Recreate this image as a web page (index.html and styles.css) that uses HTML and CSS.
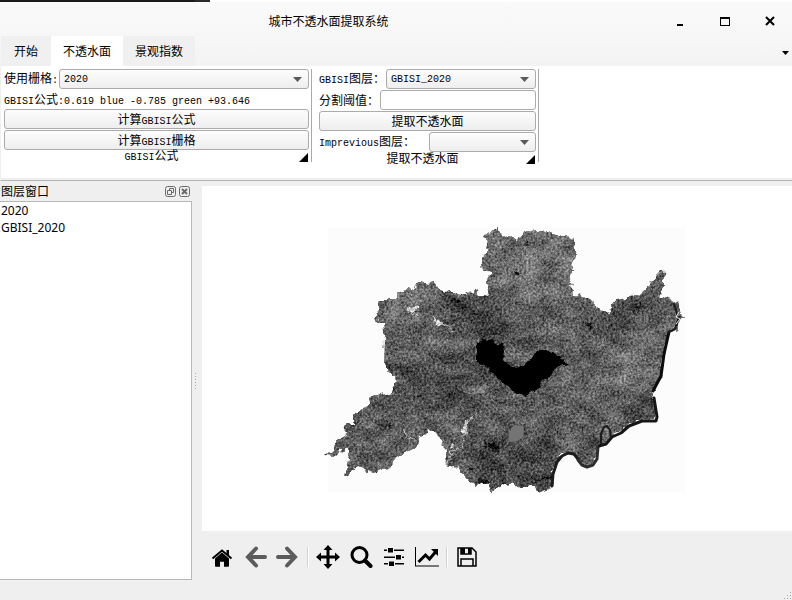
FILE: index.html
```html
<!DOCTYPE html>
<html lang="zh-CN">
<head>
<meta charset="utf-8">
<title>城市不透水面提取系统</title>
<link rel="stylesheet" href="styles.css">
</head>
<body>
<div class="window">
  <header class="titlebar">
    <h1 class="title">城市不透水面提取系统</h1>
    <button class="winbtn" aria-label="最小化"><svg width="12" height="12"><path d="M3 8h6v2H3z"/></svg></button>
    <button class="winbtn" aria-label="最大化"><svg width="12" height="12"><path d="M1 1h10v9H1zM2 3v6h8V3z" fill-rule="evenodd"/></svg></button>
    <button class="winbtn" aria-label="关闭"><svg width="12" height="12"><path d="M2 1l8 8M10 1l-8 8" class="cross"/></svg></button>
  </header>
  <nav class="tabs">
    <button class="tab">开始</button>
    <button class="tab active">不透水面</button>
    <button class="tab">景观指数</button>
    <button class="more" aria-label="更多"><svg width="7" height="4"><path d="M0 0h7L3.500 4z"/></svg></button>
  </nav>
  <section class="ribbon">
    <div class="group wide">
      <div class="row">
        <label for="raster">使用栅格<span class="en">:</span></label>
        <span class="combo"><select id="raster"><option>2020</option></select></span>
      </div>
      <p class="formula"><span class="en">GBISI</span>公式<span class="en">:0.619 blue -0.785 green +93.646</span></p>
      <button class="push">计算<span class="en">GBISI</span>公式</button>
      <button class="push">计算<span class="en">GBISI</span>栅格</button>
      <div class="caption"><span><span class="en">GBISI</span>公式</span><svg width="9" height="9"><path d="M9 0v9H0z"/></svg></div>
    </div>
    <div class="group narrow">
      <div class="row">
        <label for="layer"><span class="en">GBISI</span>图层：</label>
        <span class="combo"><select id="layer"><option>GBISI_2020</option></select></span>
      </div>
      <div class="row">
        <label for="threshold">分割阈值：</label>
        <input id="threshold" class="field" type="text">
      </div>
      <button class="push">提取不透水面</button>
      <div class="row">
        <label for="impervious" class="roomy"><span class="en">Imprevious</span>图层：</label>
        <span class="combo"><select id="impervious"><option></option></select></span>
      </div>
      <div class="caption"><span>提取不透水面</span><svg width="9" height="9"><path d="M9 0v9H0z"/></svg></div>
    </div>
  </section>
  <main class="workspace">
    <aside class="dock">
      <div class="dock-head">
        <h2>图层窗口</h2>
        <button aria-label="浮动"><svg width="11" height="11"><rect x=".5" y=".5" width="10" height="10" rx="2"/><path d="M4.500 4.500v-2h4v4h-2M2.500 4.500h4v4h-4z"/></svg></button>
        <button aria-label="关闭"><svg width="11" height="11"><rect x=".5" y=".5" width="10" height="10" rx="2"/><path d="M3 3l5 5M8 3l-5 5" class="thick"/></svg></button>
      </div>
      <ul class="layers">
        <li>2020</li>
        <li>GBISI_2020</li>
      </ul>
    </aside>
    <div class="splitter"><i></i><i></i><i></i><i></i><i></i><i></i></div>
    <div class="view">
      <div class="canvas">
        <svg class="map" viewBox="202 186 590 345" role="img" aria-label="GBISI_2020">
          <defs>
            <filter id="terrain" x="320" y="220" width="372" height="280" filterUnits="userSpaceOnUse" color-interpolation-filters="sRGB">
              <feTurbulence type="fractalNoise" baseFrequency=".14" numOctaves="2" seed="4" result="edge"/>
              <feDisplacementMap in="SourceGraphic" in2="edge" scale="9" xChannelSelector="R" yChannelSelector="G" result="land"/>
              <feTurbulence type="fractalNoise" baseFrequency=".45" numOctaves="3" seed="9"/>
              <feColorMatrix values="1 0 0 0 0 1 0 0 0 0 1 0 0 0 0 0 0 0 0 1" result="fine"/>
              <feTurbulence type="fractalNoise" baseFrequency=".05 .08" numOctaves="4" seed="21"/>
              <feColorMatrix values="0 1 0 0 0 0 1 0 0 0 0 1 0 0 0 0 0 0 0 1" result="coarse"/>
              <feComposite in="fine" in2="coarse" operator="arithmetic" k2=".65" k3=".35" result="noise"/>
              <feComposite in="land" in2="noise" operator="arithmetic" k2="1" k3="1" k4="-.5"/>
              <feColorMatrix values="1 0 0 0 0 0 1 0 0 0 0 0 1 0 0 0 0 0 0 1"/>
              <feComposite in2="land" operator="in"/>
            </filter>
            <filter id="shore" x="470" y="330" width="110" height="75" filterUnits="userSpaceOnUse">
              <feTurbulence type="fractalNoise" baseFrequency=".2" numOctaves="2" seed="2" result="edge"/>
              <feDisplacementMap in="SourceGraphic" in2="edge" scale="5" xChannelSelector="R" yChannelSelector="G"/>
            </filter>
            <filter id="soft" x="-30%" y="-30%" width="160%" height="160%"><feGaussianBlur stdDeviation="7"/></filter>
            <clipPath id="region"><use href="#outline"/></clipPath>
          </defs>
          <rect x="328" y="228" width="357" height="264" fill="#fcfcfc"/>
          <g filter="url(#terrain)">
            <path id="outline" fill="#5e5e5e" d="M496 228L490 234 483 235 488 243 487 250 482 258 483 270 491 273 489 280 490 287 487 296 480 295 473 291 467 294 460 296 453 291 445 292 438 289 435 283 428 285 420 283 410 289 400 291 397 298 387 300 378 303 380 310 373 318 383 324 385 340 384 367 397 380 392 392 370 398 363 410 353 412 353 423 344 428 346 435 337 440 334 448 327 455 335 456 347 446 349 453 345 477 357 468 373 472 390 467 397 457 415 448 420 437 428 429 438 434 446 450 447 467 455 466 467 477 475 485 487 482 491 492 500 486 513 483 520 487 537 487 540 492 551 488 552 475 556 462 562 455 568 452 574 453 579 458 583 464 587 466 592 464 596 459 597 446 605 443 611 436 620 432 629 424 642 419 655 420 656 417 653 398 650 392 653 393 661 377 664 353 669 333 677 330 683 315 678 303 667 298 660 295 664 288 664 280 663 269 657 275 650 285 637 297 628 298 617 300 608 312 600 310 590 300 575 294 573 287 567 282 575 272 571 265 573 260 575 250 572 237 560 236 550 232 537 230 527 233 517 240 507 238 500 235z"/>
            <g clip-path="url(#region)">
              <g filter="url(#soft)">
                <path fill="#6e6e6e" d="M490 225h85v70l-80 10z"/>
                <path fill="#424242" d="M440 290h48l30 40-20 20-38-20z"/>
                <path fill="#4c4c4c" d="M395 365l80-10 45 45-60 5-65 5z"/>
                <path fill="#707070" d="M630 335l32 0-5 48-45 20-15-25z"/>
                <path fill="#474747" d="M470 435l55-5 30 15v50h-80z"/>
                <path fill="#454545" d="M625 395h35v25h-35zM600 310l40-12 15-14-4 25-40 25z"/>
                <path fill="#797979" d="M380 302l25-14 30 2-10 20-35 5z"/>
              </g>
              <path fill="#777" d="M462 387l25-3 3 5-8 5-18-2z"/>
              <path fill="#3e3e3e" d="M368 417l12 4 8-2 4 6-2 8-4-6-8-1zM610 324l23-4-5 6-18 1z"/>
              <path fill="#171717" d="M485 441l10 2 4 4-4 5-6-5-6-1zM466 466l8 2 3 3-8-1zM530 478l24-1v3h-20zM480 478l8 2-2 6-8-3z"/>
              <path fill="#111" d="M589 323l4 1-2 4-2-2zM525 241l3 2-2 2zM514 271l4 3-2 2zM452 299l8 2-4 4z"/>
              <path fill="none" stroke="#343434" stroke-width="1" d="M625 317l12-9 8-12 8-8M615 330l15-10 15-12M547 335l-5-18 9-16M555 430l10 10M573 410l-3 18"/>
              <path fill="none" stroke="#bdbdbd" stroke-width="1" d="M403 302l6 10 9 3M432 316l7 7 16 8M447 466l4-14 10-5 4-18 7-13M404 428l2 8 8 6"/>
              <path fill="#d5d5d5" d="M407 308l4-3 2 2 4-1 1 4-4 2-4-1zM434 321l4-3 3 2 2 4-4 1zM463 427l4-6 1 6-3 8zM451 445l3 2-2 4z"/>
            </g>
          </g>
          <g fill="none" stroke-linecap="round" stroke-linejoin="round">
            <path stroke="#1c1c1c" stroke-width="3" d="M552 486l1-12 4-12 5-6 6-3 6 1 4 5"/>
            <path stroke="#2c2c2c" stroke-width="3" d="M578 460l4 5 5 2 6-2 4-6 1-12"/>
            <path stroke="#161616" stroke-width="3" d="M599 446l7-2 6-7 9-4 8-7 13-5h14l1-4-3-19"/>
            <path stroke="#0c0c0c" stroke-width="3" d="M653 391l8-15 3-22 5-22"/>
            <path stroke="#1c1c1c" stroke-width="2" d="M601 443v-9l3-7 3-1 3 4 1 7M669 332l6-3 4-12M674 304l3 10"/>
            <path stroke="#e5e5e5" d="M679 312l-3 5 4 2-4 5"/>
          </g>
          <path filter="url(#shore)" fill="#050505" d="M477 343L483 339 493 340 497 345 503 343 504 353 502 361 507 363 513 367 525 365 532 357 537 351 550 351 558 355 563 360 569 364 560 366 555 369 550 377 543 380 538 390 530 392 525 396 513 391 503 383 497 377 487 367 477 363z"/>
          <path fill="#747474" d="M512 427l3-2 8 1 1 6-2 6-5 3-9 1 1-7z"/>
        </svg>
      </div>
      <div class="toolbar">
        <button aria-label="Home"><svg viewBox="0 0 24 24"><path d="M12 7.500l7 6V21a.8.8 0 0 1-.8.8H14v-5h-4v5H5.800A.8.8 0 0 1 5 21v-7.500z"/><path d="M16.500 5H19v5h-2.500z"/><path d="M2.500 13.500L12 5.500l9.500 8" class="ln"/></svg></button>
        <button aria-label="Back" class="dim"><svg viewBox="0 0 24 24"><path d="M13 3.500L5 12l8 8.500M6 12h16" class="arrow"/></svg></button>
        <button aria-label="Forward" class="dim"><svg viewBox="0 0 24 24"><path d="M11 3.500l8 8.500-8 8.500M18 12H2" class="arrow"/></svg></button>
        <span class="sep"></span>
        <button aria-label="Pan"><svg viewBox="0 0 24 24"><path d="M12 0l4.500 5h-3v5.500H19v-3l5 4.500-5 4.500v-3h-5.500V19h3L12 24l-4.500-5h3v-5.500H5v3L0 12l5-4.500v3h5.500V5h-3z"/></svg></button>
        <button aria-label="Zoom"><svg viewBox="0 0 24 24"><circle cx="10.500" cy="10" r="7.500" class="ring"/><path d="M16 15.500l5.500 5.500" class="arrow"/></svg></button>
        <button aria-label="Subplots"><svg viewBox="0 0 24 24"><path d="M2 4.500h20V6H2zM2 11.500h20V13H2zM2 18h20v1.500H2z"/><path class="gap" d="M5 3h7v5H5zM13 9h7v6h-7zM6 16h7v6H6z"/><path d="M6 3h5v4.500H6zM14 10h5v4.500h-5zM7 16.500h5V21H7z"/></svg></button>
        <button aria-label="Edit axes"><svg viewBox="0 0 24 24"><path d="M0 2h1v18.500h23v1H0z"/><path d="M3.500 17l7-7 4 4 6-7" class="trend"/><path d="M16 4h7v7z"/></svg></button>
        <span class="sep"></span>
        <button aria-label="Save"><svg viewBox="0 0 24 24"><path d="M3 3h14l4 4v14H3zM6 21v-7h12v7M6 3v6h10V3" class="thin"/><path d="M6 3h4v6H6zM13 3h3v6h-3z"/></svg></button>
      </div>
    </div>
  </main>
  <footer class="status"><svg width="8" height="8"><path d="M6 0h1v1H6zM3 3h1v1H3zM6 3h1v1H6zM0 6h1v1H0zM3 6h1v1H3zM6 6h1v1H6z"/></svg></footer>
</div>
</body>
</html>
```
FILE: styles.css
```css
* { box-sizing: border-box; }
body {
  margin: 0;
  font: 12px/16px "Liberation Sans", "Noto Sans CJK SC", sans-serif;
  color: #000;
  background: #efefef;
}
h1, h2, p, ul { margin: 0; padding: 0; font: inherit; list-style: none; }
button, select, input { font: inherit; color: inherit; margin: 0; }
button { border: 0; padding: 0; background: none; }
svg { display: block; }

.en { font-family: "Liberation Mono", monospace; font-size: 10px; }
.window { display: flex; flex-direction: column; min-height: 100vh; }

.titlebar {
  display: flex;
  align-items: center;
  height: 36px;
  padding-top: 8px;
  background: linear-gradient(90deg, #1b191a 195px, #2b2929 195px 210px, #fff 210px) top / 100% 2px no-repeat, linear-gradient(#fafafa, #f7f7f7);
}
.title { flex: 1; text-align: center; }
.winbtn { display: flex; justify-content: center; width: 45px; }
.cross { fill: none; stroke: #000; stroke-width: 2; }

.tabs { display: flex; height: 30px; padding-left: 1px; background: linear-gradient(#f7f7f7, #f3f3f3); }
.tab { min-width: 50px; padding: 2px 12px 0; background: #f0f0f0; }
.tab.active { background: #fff; }
.more { margin-left: auto; padding: 4px 3px 0 0; }

.ribbon { display: flex; height: 115px; padding: 3px 4px 0; background: #fff; border-left: 1px solid #f0f0f0; border-bottom: 1px solid #b4b4b4; box-shadow: inset 0 -2px #efefef; }
.group {
  display: flex;
  flex-direction: column;
  gap: 1px;
  height: 93px;
  margin-right: 7px;
  padding-right: 2px;
  border-right: 1px solid #a8a8a8;
}
.group > * { flex-shrink: 0; }
.wide { width: 308px; margin-left: -1px; }
.narrow { width: 220px; }
.row { display: flex; align-items: center; gap: 1px; height: 20px; }
.row label { padding-top: 2px; white-space: nowrap; }
.row .roomy { padding-right: 13px; }
.formula { height: 18px; line-height: 20px; white-space: nowrap; }
.combo { position: relative; flex: 1; height: 100%; }
.combo::after {
  content: "";
  position: absolute;
  right: 7px;
  top: 8px;
  width: 9px;
  height: 5px;
  background: #5a5a5a;
  clip-path: polygon(0 0, 100% 0, 50% 100%);
}
.combo select, .field, .push { border: 1px solid #ababab; border-radius: 3px; }
.combo select {
  display: block;
  width: 100%;
  height: 100%;
  padding: 2px 4px 0;
  appearance: none;
  font: 10px/16px "Liberation Mono", monospace;
}
.combo select, .push { background: linear-gradient(#fdfdfd, #eee); }
.field { flex: 1; min-width: 0; height: 100%; padding: 0 4px; background: #fff; }
.push { height: 20px; padding-top: 2px; line-height: 16px; }
.caption { display: flex; align-items: center; height: 12px; line-height: 12px; }
.caption > span { flex: 1; text-align: center; }
.caption svg { margin-right: 1px; }

.workspace { display: flex; flex: 1; }
.dock { display: flex; flex-direction: column; flex: 0 0 192px; }
.dock-head { display: flex; align-items: center; gap: 3px; height: 20px; padding-right: 2px; }
.dock-head h2 { flex: 1; padding: 2px 0 0 1px; }
.dock-head svg { fill: none; stroke: #6b6b6b; }
.dock-head .thick { stroke-width: 2; }
.layers {
  flex: 1;
  padding-left: 1px;
  background: #fff;
  border: 1px solid #b8b8b8;
  border-left: 0;
  font: 12px/17px "Noto Sans", sans-serif;
}
.splitter { display: flex; flex-direction: column; justify-content: center; gap: 2px; width: 10px; padding-left: 3px; }
.splitter i { width: 1px; height: 1px; background: #aaa; }
.view { display: flex; flex: 1; flex-direction: column; min-width: 0; padding-top: 5px; }
.canvas { display: grid; flex: 1; background: #fff; }
.map { width: 100%; height: 100%; }
.toolbar { display: flex; gap: 1px; padding: 10px 4px 7px; }
.toolbar button { display: grid; place-items: center; width: 32px; height: 32px; }
.toolbar svg { width: 24px; height: 24px; }
.ln, .ring, .arrow, .trend, .thin { fill: none; stroke: #000; stroke-width: 2; }
.ring { stroke-width: 3; }
.arrow { stroke-width: 4; stroke-linecap: round; }
.trend { stroke-width: 3; }
.thin { stroke-width: 1.5; }
.gap { fill: #efefef; }
.dim .arrow { stroke: #5c5c5c; }
.sep { width: 6px; height: 20px; margin-top: 6px; background: linear-gradient(90deg, transparent 2px, #d2d2d2 2px 3px, #fff 3px 4px, transparent 4px); }
.status { display: flex; justify-content: flex-end; align-items: flex-end; height: 20px; }
.status svg { fill: #a8a8a8; }
```
